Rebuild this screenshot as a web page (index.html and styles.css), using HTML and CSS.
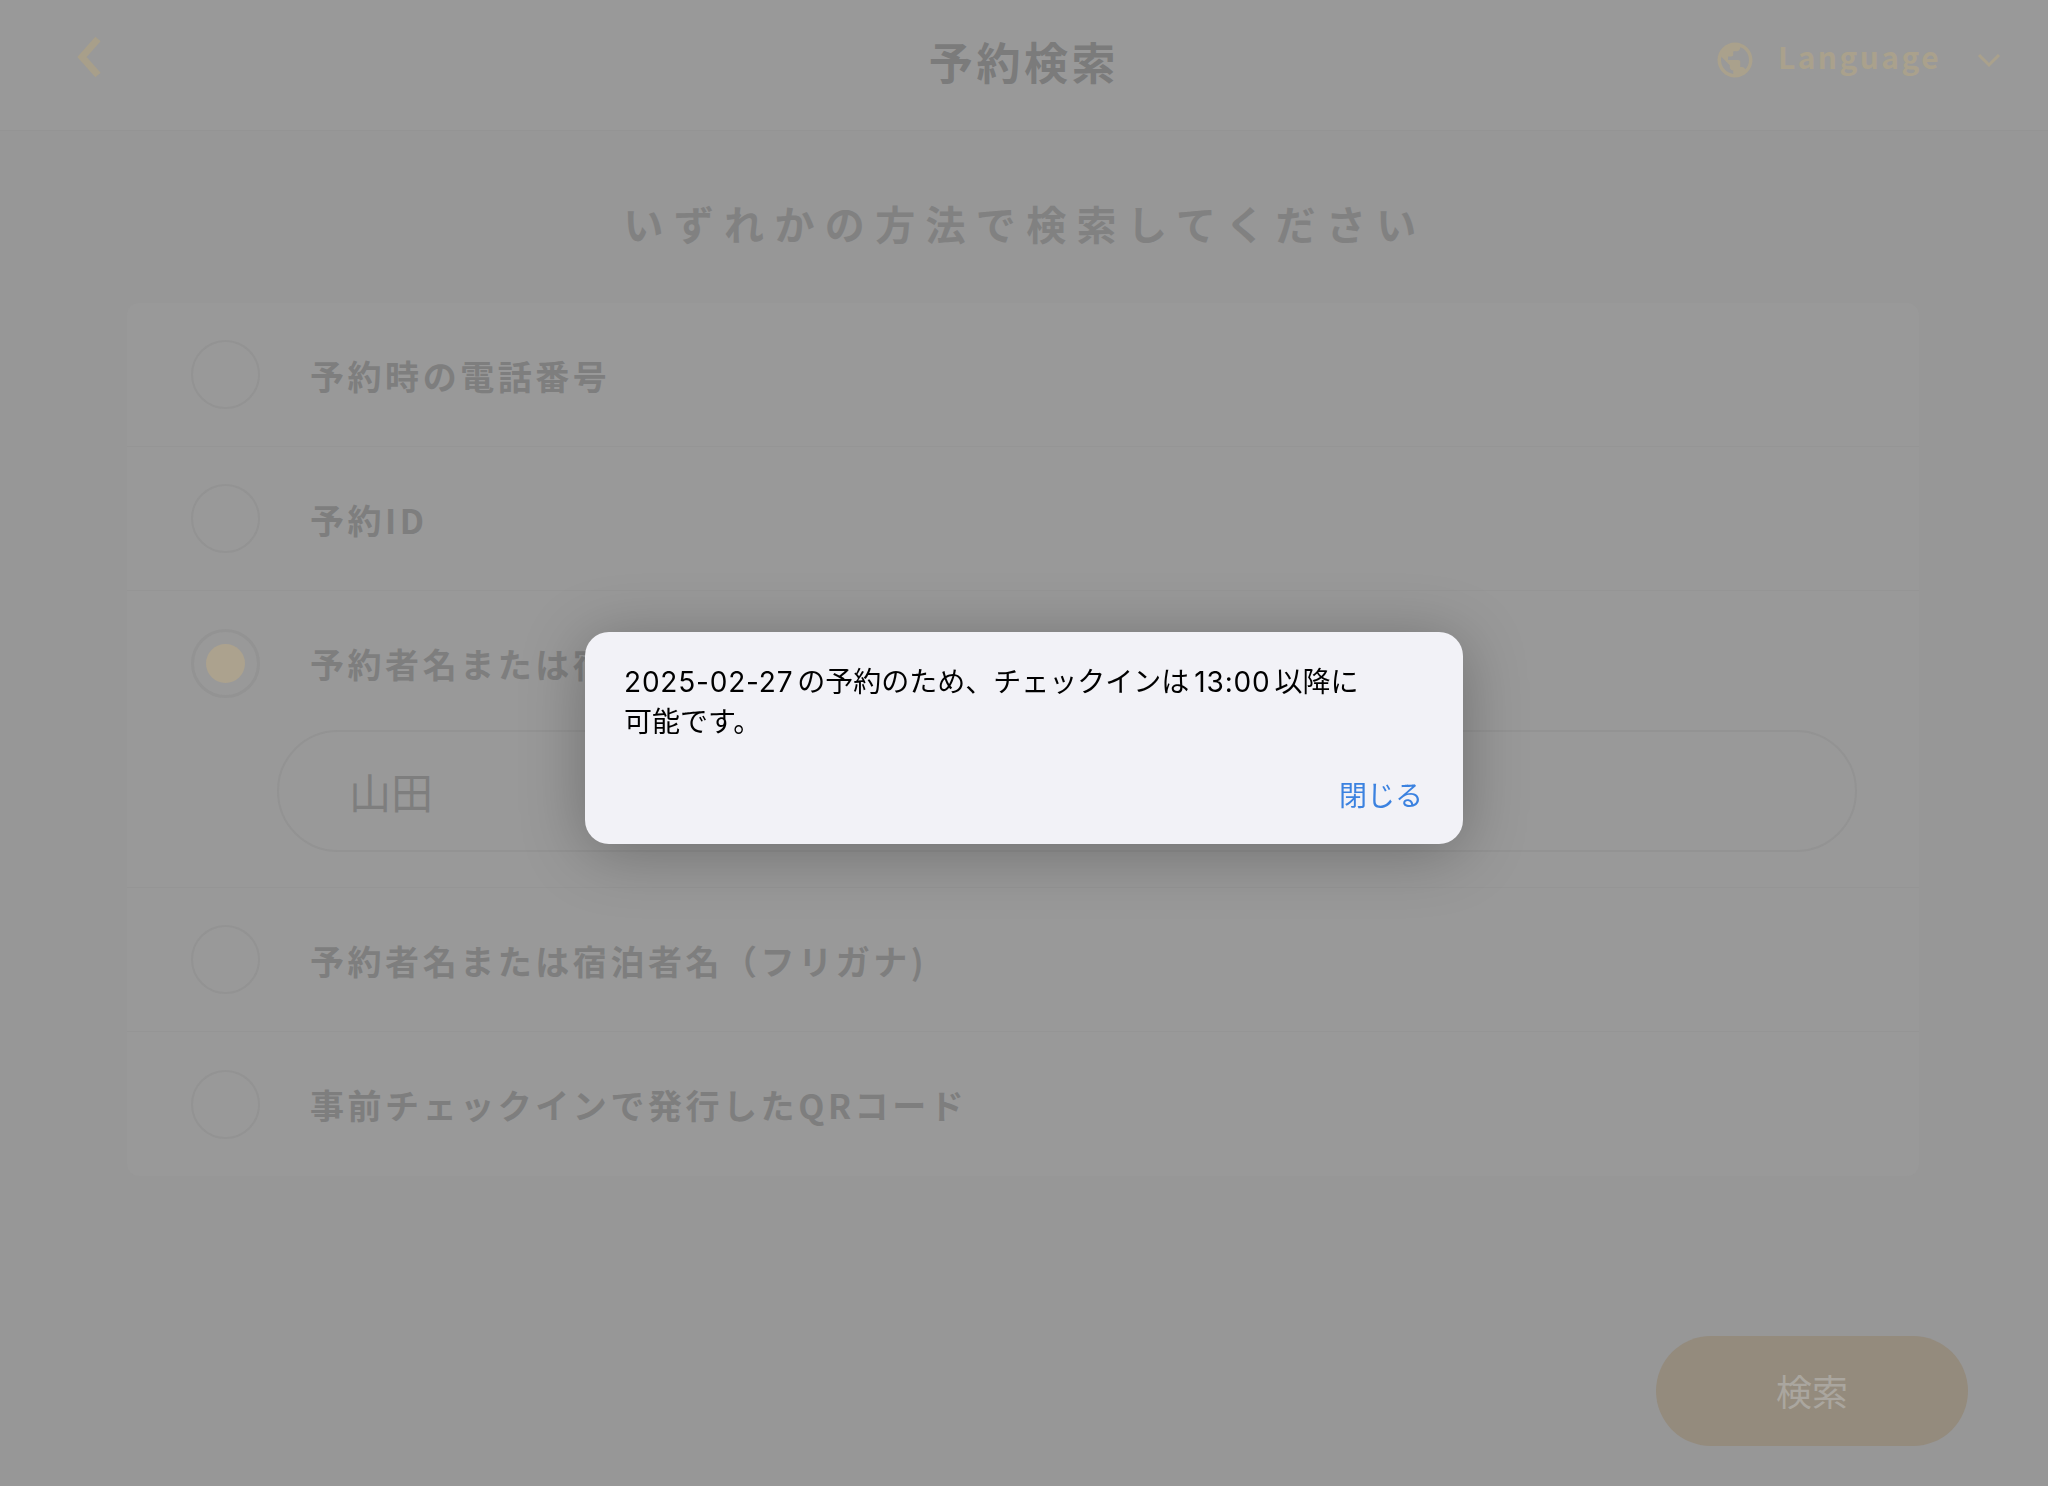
FILE: index.html
```html
<!DOCTYPE html>
<html lang="ja">
<head>
<meta charset="utf-8">
<title>予約検索</title>
<link rel="stylesheet" href="styles.css">
</head>
<body>
<div class="page">
  <header class="topbar">
    <div class="back">
      <svg class="back-icon" viewBox="0 0 26 44"><path d="M22 4 6 22l16 18"/></svg>
    </div>
    <h1 class="title">予約検索</h1>
    <div class="lang">
      <svg class="globe" viewBox="0 0 24 24"><path d="M12 2C6.48 2 2 6.48 2 12s4.48 10 10 10 10-4.48 10-10S17.52 2 12 2zm-1 17.93c-3.95-.49-7-3.85-7-7.93 0-.62.08-1.21.21-1.79L9 15v1c0 1.1.9 2 2 2v1.93zm6.9-2.54c-.26-.81-1-1.39-1.9-1.39h-1v-3c0-.55-.45-1-1-1H8v-2h2c.55 0 1-.45 1-1V7h2c1.1 0 2-.9 2-2v-.41c2.93 1.19 5 4.06 5 7.41 0 2.08-.8 3.97-2.1 5.39z"/></svg>
      <span class="lang-text">Language</span>
      <svg class="lang-chevron" viewBox="0 0 24 16"><path d="M2 3l10 10L22 3"/></svg>
    </div>
  </header>
  <main class="content">
    <h2 class="heading">いずれかの方法で検索してください</h2>
    <section class="card">
      <div class="row"><span class="radio"></span><span class="label">予約時の電話番号</span></div>
      <div class="row"><span class="radio"></span><span class="label">予約ID</span></div>
      <div class="row-open">
        <div class="row row-plain"><span class="radio radio-on"><span class="dot"></span></span><span class="label">予約者名または宿泊者名</span></div>
        <div class="field">山田</div>
      </div>
      <div class="row"><span class="radio"></span><span class="label">予約者名または宿泊者名（フリガナ)</span></div>
      <div class="row row-plain"><span class="radio"></span><span class="label">事前チェックインで発行したQRコード</span></div>
    </section>
  </main>
  <footer class="actions">
    <div class="search-btn">検索</div>
  </footer>
</div>
<div class="backdrop">
  <div class="dialog">
    <p class="dialog-text"><span class="num">2025-02-27</span>の予約のため、チェックインは<span class="num num-mid">13:00</span>以降に<br>可能です。</p>
    <div class="dialog-actions"><span class="dialog-close">閉じる</span></div>
  </div>
</div>
</body>
</html>
```

FILE: styles.css
```css
* { box-sizing: border-box; }
html, body { margin: 0; padding: 0; }
body {
  width: 2048px;
  height: 1486px;
  overflow: hidden;
  background: #979797;
  font-family: "Noto Sans CJK JP", "Noto Sans", sans-serif;
  color: #7b7b7b;
}
.page { display: flex; flex-direction: column; height: 1486px; }

.topbar {
  height: 131px;
  flex: none;
  display: grid;
  grid-template-columns: 1fr auto 1fr;
  align-items: start;
  background: #999999;
  border-bottom: 1px solid #949494;
}
.back { padding: 35px 0 0 76px; }
.back-icon { display: block; width: 26px; height: 44px; fill: none; stroke: #a89f8a; stroke-width: 7; }
.title {
  margin: 0;
  padding-top: 30px;
  font-size: 44px;
  line-height: 62px;
  font-weight: 700;
  letter-spacing: 3.6px;
  color: #7b7b7b;
}
.lang {
  display: flex;
  align-items: center;
  justify-content: flex-end;
  padding: 39px 47px 0 0;
  color: #aaa18c;
}
.globe { width: 42px; height: 42px; fill: #aaa18c; flex: none; }
.lang-text {
  margin-left: 22px;
  margin-top: -8px;
  font-size: 30px;
  line-height: 40px;
  font-weight: 700;
  letter-spacing: 2.4px;
}
.lang-chevron { width: 24px; height: 16px; margin-left: 36px; fill: none; stroke: #aaa18c; stroke-width: 3; }

.content { flex: none; padding: 0 129px 0 127px; }
.heading {
  margin: 0;
  height: 172px;
  padding: 64px 0 0 4px;
  text-align: center;
  font-size: 40px;
  line-height: 56px;
  font-weight: 700;
  letter-spacing: 10.35px;
  color: #818181;
}
.card { background: #999999; border-radius: 12px; }
.row {
  height: 144px;
  display: flex;
  align-items: center;
  padding-left: 64px;
  gap: 50px;
  border-bottom: 1px solid #959595;
}
.row-plain { border-bottom: 0; }
.row-open { border-bottom: 1px solid #959595; height: 297px; }
.radio {
  width: 69px;
  height: 69px;
  flex: none;
  display: flex;
  align-items: center;
  justify-content: center;
  border: 2px solid #939393;
  border-radius: 50%;
}
.radio-on { border-width: 3px; }
.dot { width: 39px; height: 39px; border-radius: 50%; background: #aca28e; }
.label {
  font-size: 34px;
  line-height: 46px;
  font-weight: 700;
  letter-spacing: 3.55px;
  color: #7e7e7e;
  padding-top: 2px;
}
.field {
  height: 122px;
  margin: -5px 62px 0 150px;
  padding: 0 0 2px 70px;
  display: flex;
  align-items: center;
  border: 2px solid #939393;
  border-radius: 61px;
  font-size: 42px;
  color: #7e7e7e;
}

.actions {
  flex: 1;
  display: flex;
  justify-content: flex-end;
  padding: 160px 80px 0 0;
}
.search-btn {
  width: 312px;
  height: 110px;
  padding-bottom: 3px;
  display: flex;
  align-items: center;
  justify-content: center;
  border-radius: 55px;
  background: #948b7d;
  color: #aaa69f;
  font-size: 36px;
}

.backdrop {
  position: fixed;
  inset: 0;
  display: flex;
  align-items: center;
  justify-content: center;
  padding-bottom: 10px;
}
.dialog {
  width: 878px;
  height: 212px;
  padding: 30px 40px 0 39px;
  background: #f2f2f7;
  border-radius: 24px;
  box-shadow: 0 8px 64px rgba(0, 0, 0, 0.28);
  display: flex;
  flex-direction: column;
}
.dialog-text {
  margin: 0;
  font-family: Inter, "Noto Sans CJK JP", sans-serif;
  font-size: 28px;
  line-height: 40px;
  color: #000000;
}
.num { letter-spacing: 0.8px; margin-right: 4px; }
.num-mid { margin-left: 5px; }
.dialog-actions {
  margin-top: 32px;
  display: flex;
  justify-content: flex-end;
}
.dialog-close {
  font-size: 28px;
  line-height: 40px;
  color: #3b82e0;
}
```
